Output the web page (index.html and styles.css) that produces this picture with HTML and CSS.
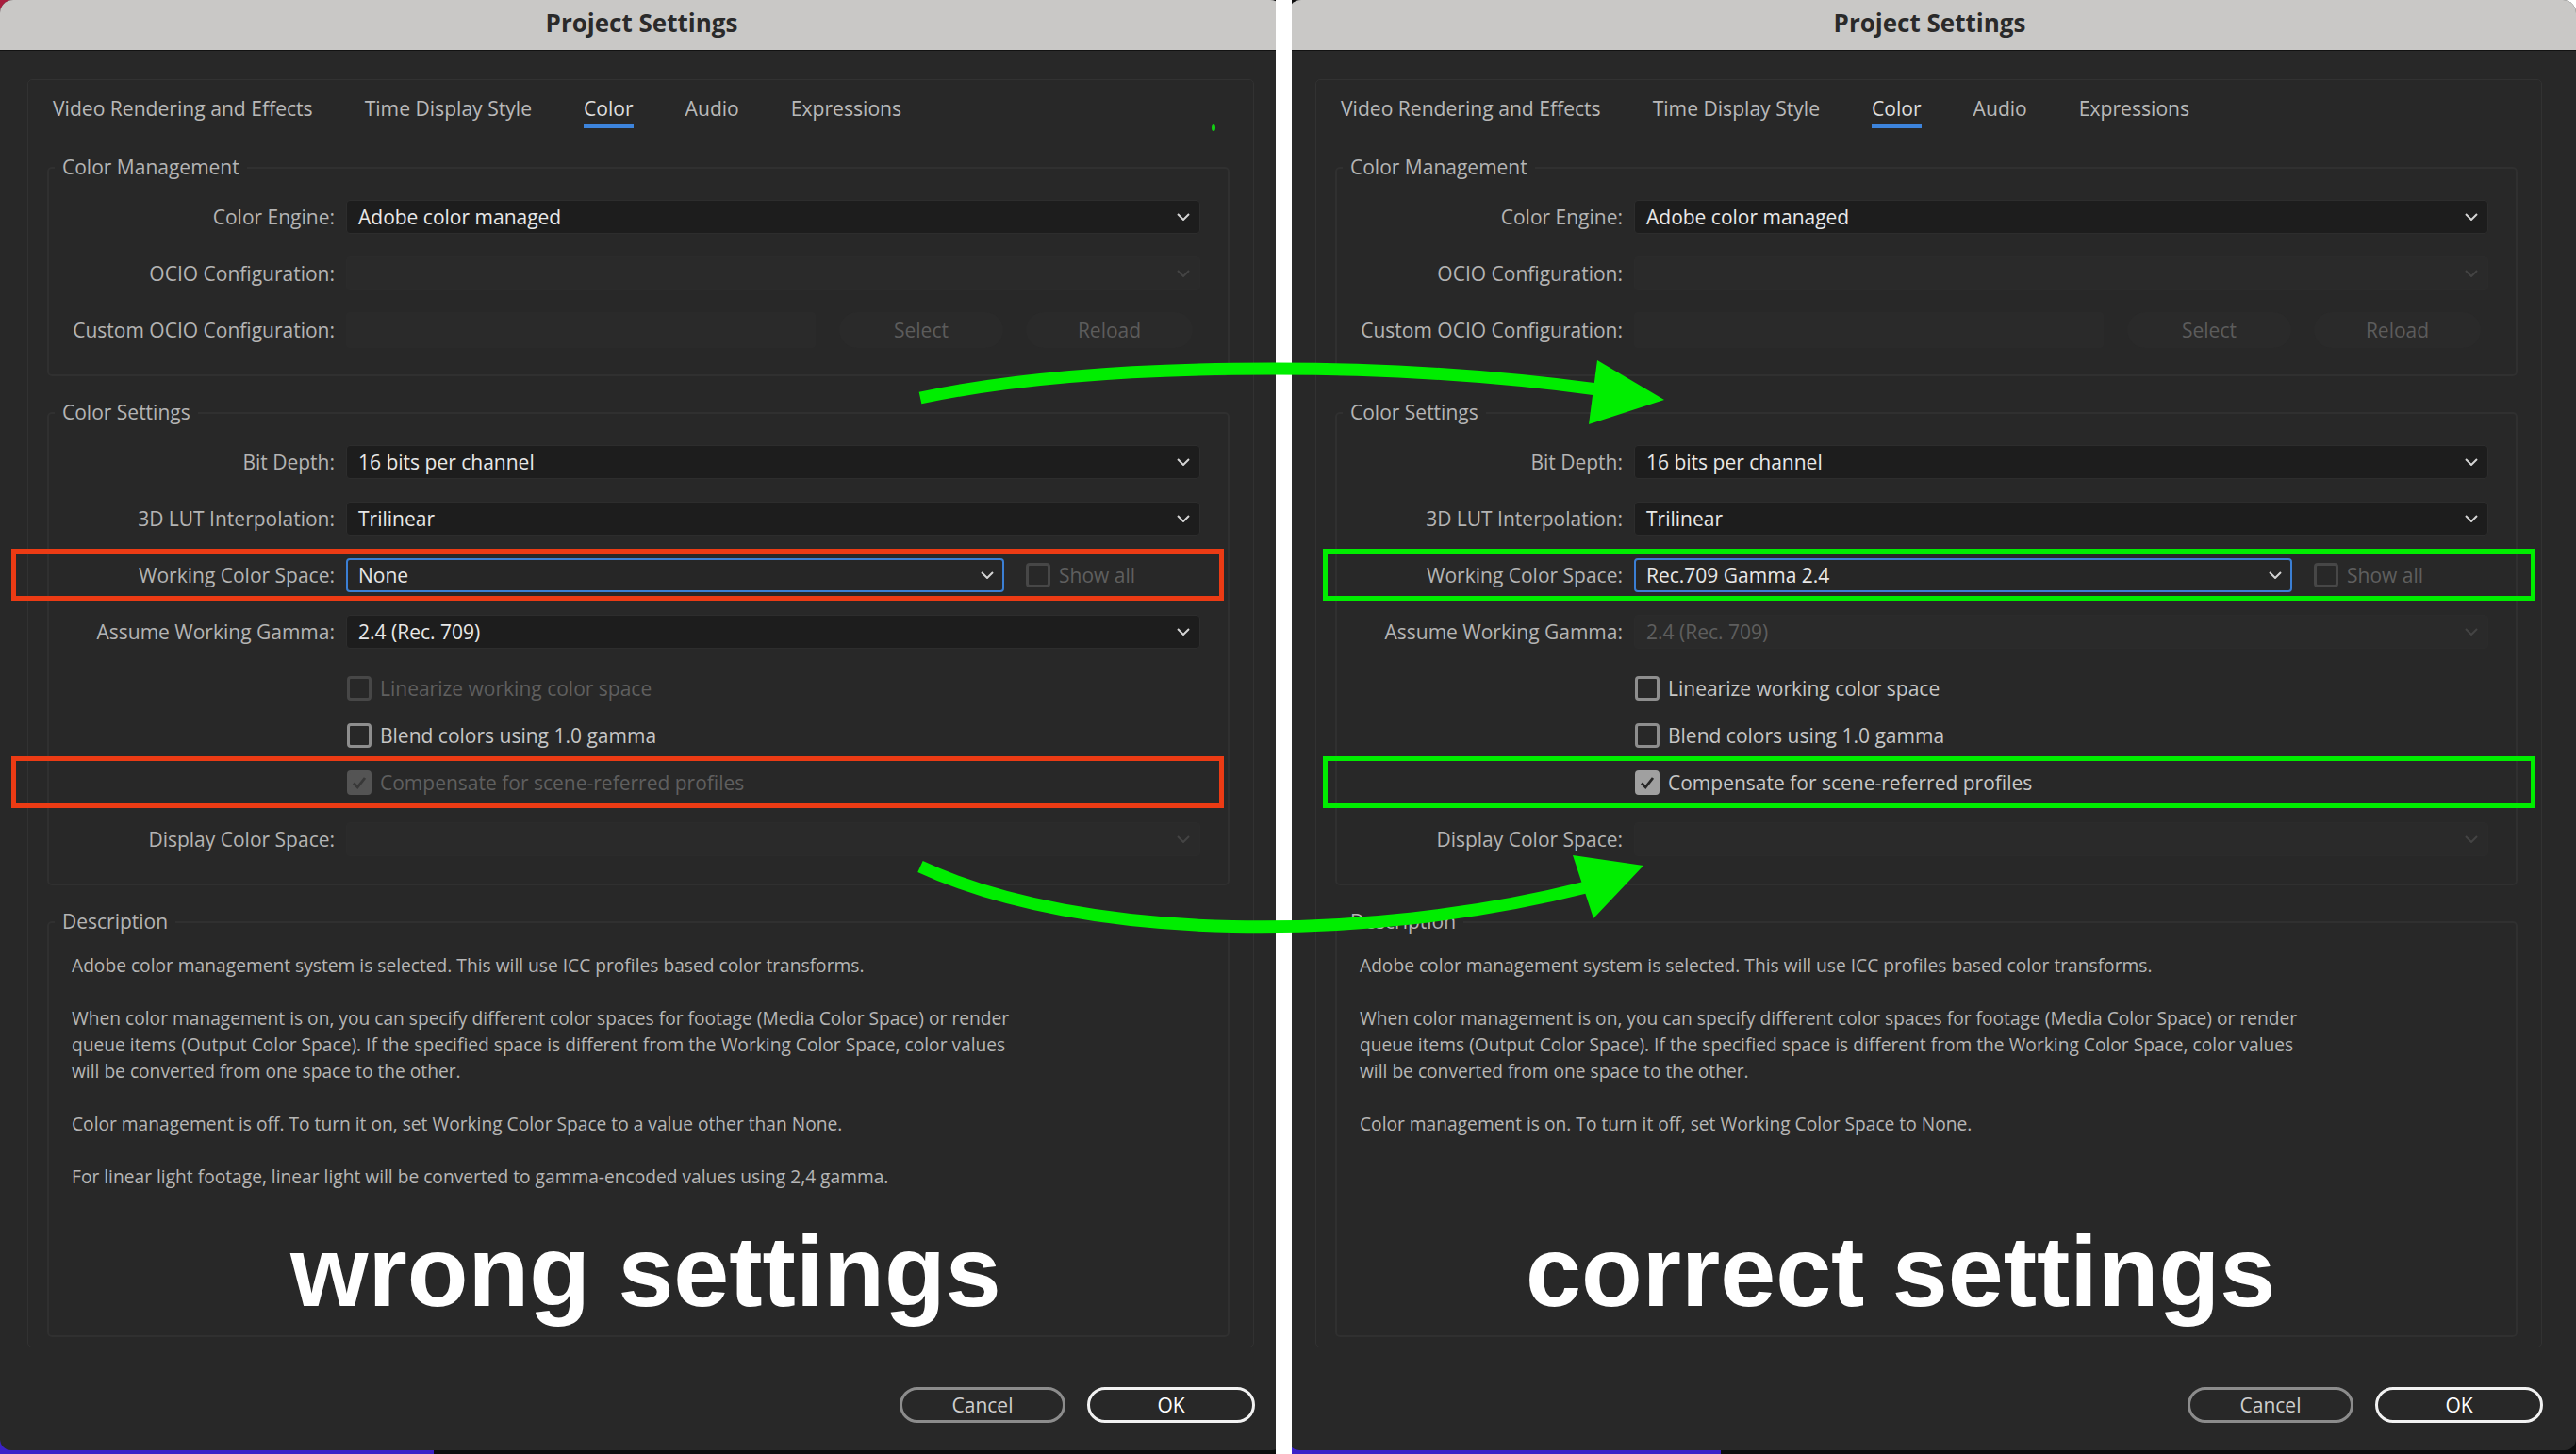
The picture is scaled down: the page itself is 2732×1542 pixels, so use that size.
FILE: index.html
```html
<!DOCTYPE html>
<html>
<head>
<meta charset="utf-8">
<title>Project Settings comparison</title>
<link rel="stylesheet" href="styles.css">
</head>
<body>
<div class="page">
  <section class="panel panel-left">
    <div class="dialog">
      <header class="titlebar">Project Settings</header>
      <div class="dialog-body">
        <div class="tabbox">
          <nav class="tabs">
            <span class="tab">Video Rendering and Effects</span>
            <span class="tab">Time Display Style</span>
            <span class="tab active">Color</span>
            <span class="tab">Audio</span>
            <span class="tab">Expressions</span>
            <span class="status-dot"></span>
          </nav>
          <div class="group">
            <div class="group-title">Color Management</div>
            <div class="rows">
              <div class="row"><span class="label">Color Engine:</span><div class="combo"><span class="value">Adobe color managed</span><svg class="chev" viewBox="0 0 14 8"><path d="M1 1l6 6 6-6"/></svg></div></div>
              <div class="row"><span class="label">OCIO Configuration:</span><div class="combo disabled"><span class="value"></span><svg class="chev" viewBox="0 0 14 8"><path d="M1 1l6 6 6-6"/></svg></div></div>
              <div class="row"><span class="label">Custom OCIO Configuration:</span><div class="ocio"><span class="field"></span><span class="ghost ghost-select">Select</span><span class="ghost ghost-reload">Reload</span></div></div>
            </div>
          </div>
          <div class="group">
            <div class="group-title">Color Settings</div>
            <div class="rows">
              <div class="row"><span class="label">Bit Depth:</span><div class="combo"><span class="value">16 bits per channel</span><svg class="chev" viewBox="0 0 14 8"><path d="M1 1l6 6 6-6"/></svg></div></div>
              <div class="row"><span class="label">3D LUT Interpolation:</span><div class="combo"><span class="value">Trilinear</span><svg class="chev" viewBox="0 0 14 8"><path d="M1 1l6 6 6-6"/></svg></div></div>
              <div class="row"><span class="label">Working Color Space:</span><div class="cell"><div class="combo focus"><span class="value">None</span><svg class="chev" viewBox="0 0 14 8"><path d="M1 1l6 6 6-6"/></svg></div><span class="check off"><span class="box"></span>Show all</span></div></div>
              <div class="row"><span class="label">Assume Working Gamma:</span><div class="combo"><span class="value">2.4 (Rec. 709)</span><svg class="chev" viewBox="0 0 14 8"><path d="M1 1l6 6 6-6"/></svg></div></div>
              <div class="checks">
                <div class="row check-row"><span class="label"></span><span class="check off"><span class="box"></span>Linearize working color space</span></div>
                <div class="row check-row"><span class="label"></span><span class="check"><span class="box"></span>Blend colors using 1.0 gamma</span></div>
                <div class="row check-row"><span class="label"></span><span class="check off"><span class="box checked"><svg viewBox="0 0 20 20"><path d="M4 10.5l4.2 4.3L16 5"/></svg></span>Compensate for scene-referred profiles</span></div>
              </div>
              <div class="row"><span class="label">Display Color Space:</span><div class="combo disabled"><span class="value"></span><svg class="chev" viewBox="0 0 14 8"><path d="M1 1l6 6 6-6"/></svg></div></div>
            </div>
          </div>
          <div class="group desc">
            <div class="group-title">Description</div>
            <div class="desc-text">
              <p>Adobe color management system is selected. This will use ICC profiles based color transforms.</p>
              <p>When color management is on, you can specify different color spaces for footage (Media Color Space) or render<br>queue items (Output Color Space). If the specified space is different from the Working Color Space, color values<br>will be converted from one space to the other.</p>
              <p>Color management is off. To turn it on, set Working Color Space to a value other than None.</p>
              <p>For linear light footage, linear light will be converted to gamma-encoded values using 2,4 gamma.</p>
            </div>
          </div>
        </div>
        <div class="footer">
          <span class="btn">Cancel</span>
          <span class="btn primary">OK</span>
        </div>
      </div>
    </div>
    <div class="mark mark-top"></div>
    <div class="mark mark-bottom"></div>
    <div class="verdict">wrong settings</div>
  </section>

  <div class="divider"></div>

  <section class="panel panel-right">
    <div class="dialog">
      <header class="titlebar">Project Settings</header>
      <div class="dialog-body">
        <div class="tabbox">
          <nav class="tabs">
            <span class="tab">Video Rendering and Effects</span>
            <span class="tab">Time Display Style</span>
            <span class="tab active">Color</span>
            <span class="tab">Audio</span>
            <span class="tab">Expressions</span>
          </nav>
          <div class="group">
            <div class="group-title">Color Management</div>
            <div class="rows">
              <div class="row"><span class="label">Color Engine:</span><div class="combo"><span class="value">Adobe color managed</span><svg class="chev" viewBox="0 0 14 8"><path d="M1 1l6 6 6-6"/></svg></div></div>
              <div class="row"><span class="label">OCIO Configuration:</span><div class="combo disabled"><span class="value"></span><svg class="chev" viewBox="0 0 14 8"><path d="M1 1l6 6 6-6"/></svg></div></div>
              <div class="row"><span class="label">Custom OCIO Configuration:</span><div class="ocio"><span class="field"></span><span class="ghost ghost-select">Select</span><span class="ghost ghost-reload">Reload</span></div></div>
            </div>
          </div>
          <div class="group">
            <div class="group-title">Color Settings</div>
            <div class="rows">
              <div class="row"><span class="label">Bit Depth:</span><div class="combo"><span class="value">16 bits per channel</span><svg class="chev" viewBox="0 0 14 8"><path d="M1 1l6 6 6-6"/></svg></div></div>
              <div class="row"><span class="label">3D LUT Interpolation:</span><div class="combo"><span class="value">Trilinear</span><svg class="chev" viewBox="0 0 14 8"><path d="M1 1l6 6 6-6"/></svg></div></div>
              <div class="row"><span class="label">Working Color Space:</span><div class="cell"><div class="combo focus"><span class="value">Rec.709 Gamma 2.4</span><svg class="chev" viewBox="0 0 14 8"><path d="M1 1l6 6 6-6"/></svg></div><span class="check off"><span class="box"></span>Show all</span></div></div>
              <div class="row"><span class="label">Assume Working Gamma:</span><div class="combo disabled"><span class="value">2.4 (Rec. 709)</span><svg class="chev" viewBox="0 0 14 8"><path d="M1 1l6 6 6-6"/></svg></div></div>
              <div class="checks">
                <div class="row check-row"><span class="label"></span><span class="check"><span class="box"></span>Linearize working color space</span></div>
                <div class="row check-row"><span class="label"></span><span class="check"><span class="box"></span>Blend colors using 1.0 gamma</span></div>
                <div class="row check-row"><span class="label"></span><span class="check"><span class="box checked"><svg viewBox="0 0 20 20"><path d="M4 10.5l4.2 4.3L16 5"/></svg></span>Compensate for scene-referred profiles</span></div>
              </div>
              <div class="row"><span class="label">Display Color Space:</span><div class="combo disabled"><span class="value"></span><svg class="chev" viewBox="0 0 14 8"><path d="M1 1l6 6 6-6"/></svg></div></div>
            </div>
          </div>
          <div class="group desc">
            <div class="group-title">Description</div>
            <div class="desc-text">
              <p>Adobe color management system is selected. This will use ICC profiles based color transforms.</p>
              <p>When color management is on, you can specify different color spaces for footage (Media Color Space) or render<br>queue items (Output Color Space). If the specified space is different from the Working Color Space, color values<br>will be converted from one space to the other.</p>
              <p>Color management is on. To turn it off, set Working Color Space to None.</p>
            </div>
          </div>
        </div>
        <div class="footer">
          <span class="btn">Cancel</span>
          <span class="btn primary">OK</span>
        </div>
      </div>
    </div>
    <div class="mark mark-top good"></div>
    <div class="mark mark-bottom good"></div>
    <div class="verdict">correct settings</div>
  </section>

  <svg class="arrows" viewBox="0 0 2732 1542">
    <path class="arrow-line" d="M976 422 C1150 385 1450 380 1694 413"/>
    <polygon class="arrow-head" points="1765,424 1694,382 1685,450"/>
    <path class="arrow-line" d="M976 919 C1150 1000 1450 1000 1682 941"/>
    <polygon class="arrow-head" points="1743,918 1668,907 1690,974"/>
  </svg>
</div>
</body>
</html>
```

FILE: styles.css
```css
* { box-sizing: border-box; }
html, body { margin: 0; padding: 0; }
body {
  width: 2732px;
  height: 1542px;
  overflow: hidden;
  background: #0d0d0d;
  font-family: "Open Sans", "Noto Sans", sans-serif;
}
.page {
  position: relative;
  display: flex;
  width: 2732px;
  height: 1542px;
}
.panel {
  position: relative;
  flex: none;
  height: 1542px;
  overflow: hidden;
}
.panel-left {
  width: 1353px;
  background:
    linear-gradient(#a81e3e, #a81e3e) left top / 40px 40px no-repeat,
    linear-gradient(#3b22c8, #3b22c8) left bottom / 460px 40px no-repeat,
    #0d0d0d;
}
.divider {
  flex: none;
  width: 17px;
  background: #ffffff;
}
.panel-right {
  width: 1362px;
  background:
    linear-gradient(#ffffff, #ffffff) right top / 40px 40px no-repeat,
    linear-gradient(#3b22c8, #3b22c8) left bottom / 455px 40px no-repeat,
    #0d0d0d;
}
.dialog {
  width: 1361px;
  height: 1538px;
  background: #282828;
  border-radius: 14px 14px 12px 12px;
  overflow: hidden;
}
.panel-right .dialog {
  width: 1366px;
  margin-left: -4px;
}
.titlebar {
  height: 54px;
  border-bottom: 1px solid #121212;
  background: #c9c8c6;
  color: #2a2a2a;
  font-family: "Open Sans", sans-serif;
  font-weight: 700;
  font-size: 26px;
  line-height: 49px;
  text-align: center;
}
.panel-right .titlebar { padding-right: 5px; }
.dialog-body {
  width: 1331px;
  padding: 30px 0 0 29px;
}
.tabbox {
  width: 1301px;
  height: 1345px;
  border: 1px solid #323232;
  border-radius: 5px;
  padding: 16px 25px 10px 20px;
  display: flex;
  flex-direction: column;
}
.tabs {
  display: flex;
  gap: 55px;
  padding-left: 6px;
  height: 35px;
  flex: none;
}
.tab {
  font-size: 21.1px;
  line-height: 28px;
  padding-bottom: 3px;
  border-bottom: 4px solid transparent;
  color: #b9b9b9;
  white-space: nowrap;
}
.tab.active {
  border-bottom-color: #3d84dc;
  color: #dedede;
}
.status-dot {
  margin-left: auto;
  margin-right: 15px;
  align-self: flex-end;
  margin-bottom: -3px;
  width: 4px;
  height: 7px;
  border-radius: 50%;
  background: #12d012;
}
.group {
  flex: none;
  width: 1254px;
  border: 2px solid #303030;
  border-radius: 5px;
  margin-top: 41px;
  padding-bottom: 17px;
}
.group + .group { margin-top: 38px; }
.group.desc { flex: 1; padding-bottom: 0; }
.group-title {
  display: table;
  margin: -16px 0 0 6px;
  padding: 0 8px;
  background: #282828;
  color: #b4b4b4;
  font-size: 21px;
  line-height: 28px;
}
.rows { padding-top: 9px; }
.row {
  display: grid;
  grid-template-columns: 303px 906px;
  column-gap: 12px;
  align-items: center;
  height: 60px;
}
.label {
  text-align: right;
  color: #b4b4b4;
  font-size: 21px;
  white-space: nowrap;
}
.combo {
  height: 36px;
  background: #1d1d1d;
  border: 1px solid #2d2d2d;
  border-radius: 4px;
  display: flex;
  align-items: center;
  padding: 0 10px 0 12px;
}
.value {
  flex: 1;
  color: #e8e8e8;
  font-size: 21px;
  white-space: nowrap;
}
.chev {
  flex: none;
  width: 14px;
  height: 8px;
  fill: none;
  stroke: #d4d4d4;
  stroke-width: 2;
}
.combo.disabled {
  background: #2a2a2a;
  border-color: #2b2b2b;
}
.combo.disabled .chev { stroke: #444444; }
.combo.disabled .value { color: #5e5e5e; }
.combo.focus {
  width: 698px;
  background: #262626;
  border: 2px solid #3b7fd4;
  padding-left: 11px;
  padding-right: 9px;
}
.cell {
  display: flex;
  align-items: center;
  gap: 22px;
}
.ocio {
  display: flex;
  align-items: center;
  height: 38px;
}
.field {
  width: 498px;
  height: 38px;
  background: #2a2a2a;
  border-radius: 3px;
}
.ghost {
  height: 38px;
  border-radius: 19px;
  background: #2a2a2a;
  color: #5c5c5c;
  font-size: 21px;
  display: flex;
  align-items: center;
  justify-content: center;
}
.ghost-select { width: 174px; margin-left: 25px; }
.ghost-reload { width: 177px; margin-left: 24px; }
.checks { padding: 5px 0; }
.check-row { height: 50px; }
.check {
  display: flex;
  align-items: center;
  gap: 9px;
  margin-left: 1px;
  font-size: 21px;
  color: #c6c6c6;
  white-space: nowrap;
}
.box {
  flex: none;
  width: 26px;
  height: 26px;
  border: 3px solid #8e8e8e;
  border-radius: 4px;
}
.box.checked {
  background: #a0a0a0;
  border-color: #a0a0a0;
}
.box svg {
  display: block;
  width: 20px;
  height: 20px;
  fill: none;
  stroke: #262626;
  stroke-width: 2.8;
}
.check.off { color: #5f5f5f; }
.check.off .box { border-color: #474747; }
.check.off .box.checked { background: #545454; border-color: #545454; }
.check.off .box.checked svg { stroke: #383838; }
.desc-text {
  padding: 19px 0 0 24px;
  font-size: 19.2px;
  line-height: 28px;
  color: #b6b6b6;
  white-space: nowrap;
}
.desc-text p { margin: 0 0 28px; }
.footer {
  display: flex;
  justify-content: flex-end;
  gap: 23px;
  margin-top: 42px;
}
.btn {
  width: 176px;
  height: 38px;
  border: 3px solid #8c8c8c;
  border-radius: 19px;
  display: flex;
  align-items: center;
  justify-content: center;
  font-size: 21px;
  color: #cfcfcf;
}
.btn.primary {
  width: 178px;
  border-color: #f2f2f2;
  color: #ffffff;
}
.mark {
  position: absolute;
  left: 12px;
  width: 1286px;
  height: 55px;
  border: 5px solid #ec3b14;
}
.mark-top { top: 582px; }
.mark-bottom { top: 802px; }
.mark.good {
  left: 33px;
  border-color: #00ee00;
}
.verdict {
  position: absolute;
  top: 1295px;
  font-family: "Liberation Sans", Arial, sans-serif;
  font-weight: 700;
  font-size: 106px;
  line-height: 106px;
  color: #ffffff;
  white-space: nowrap;
}
.panel-left .verdict { left: 308px; }
.panel-right .verdict { left: 248px; }
.arrows {
  position: absolute;
  left: 0;
  top: 0;
  width: 2732px;
  height: 1542px;
  pointer-events: none;
}
.arrow-line {
  fill: none;
  stroke: #00ee00;
  stroke-width: 13;
}
.arrow-head { fill: #00ee00; }
```
